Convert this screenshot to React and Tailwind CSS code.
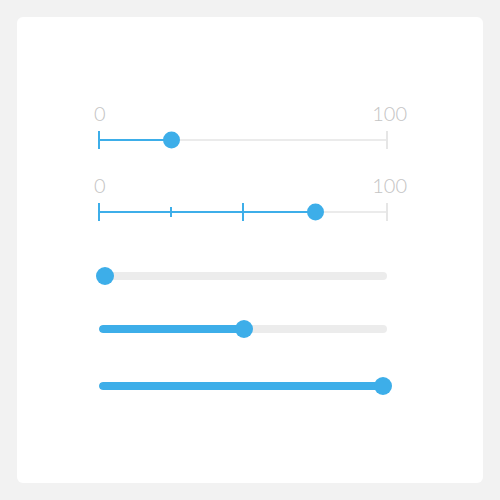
const TRACK = 288;

function Tick({ at, tall, grey }) {
  return (
    <div
      className={`absolute top-1/2 w-[2px] -translate-y-1/2 ${tall ? 'h-[18px]' : 'h-[10px]'} ${grey ? 'bg-[#e6e6e6]' : 'bg-[#3daee9]'}`}
      style={{ left: `calc(${at}% - 1px)` }}
    />
  );
}

function TickSlider({ value, ticks }) {
  return (
    <div className="w-[288px]">
      <div className="-ml-[5px] -mr-[20px] flex justify-between font-['Lato',sans-serif] text-[20px] font-light leading-[20px] text-[#c4c4c4]">
        <span>0</span>
        <span>100</span>
      </div>
      <div className="relative mt-2 flex h-[18px] items-center">
        <div className="h-[2px] bg-[#3daee9]" style={{ width: `${value}%` }} />
        <div className="h-[2px] flex-1 bg-[#ebebeb]" />
        {ticks.map((t) => (
          <Tick key={t.at} {...t} />
        ))}
        <Tick at={100} tall grey />
        <div
          className="absolute top-1/2 h-[17px] w-[17px] -translate-y-1/2 rounded-full bg-[#3daee9]"
          style={{ left: `calc(${value}% - 8.5px)` }}
        />
      </div>
    </div>
  );
}

function BarSlider({ value }) {
  // thumb centre runs from 6px to TRACK - 4px
  const centre = 6 + ((TRACK - 10) * value) / 100;
  const fill = value >= 100 ? TRACK : centre;
  return (
    <div className="relative flex h-[18px] w-[288px] items-center">
      <div className="h-2 w-full overflow-hidden rounded-full bg-[#ececec]">
        <div className="h-full rounded-full bg-[#3daee9]" style={{ width: fill }} />
      </div>
      <div
        className="absolute top-1/2 h-[18px] w-[18px] -translate-y-1/2 rounded-full bg-[#3daee9]"
        style={{ left: centre - 9 }}
      />
    </div>
  );
}

export default function App() {
  return (
    <div className="h-[500px] w-[500px] bg-[#f2f2f2] p-[17px]">
      <div className="flex h-[466px] w-[466px] flex-col rounded-[6px] bg-white pl-[82px] pt-[86px]">
        <TickSlider value={25} ticks={[{ at: 0, tall: true }]} />
        <div className="mt-[26px]">
          <TickSlider
            value={75}
            ticks={[
              { at: 0, tall: true },
              { at: 25 },
              { at: 50, tall: true },
            ]}
          />
        </div>
        <div className="mt-[46px]">
          <BarSlider value={0} />
        </div>
        <div className="mt-[35px]">
          <BarSlider value={50} />
        </div>
        <div className="mt-[39px]">
          <BarSlider value={100} />
        </div>
      </div>
    </div>
  );
}
